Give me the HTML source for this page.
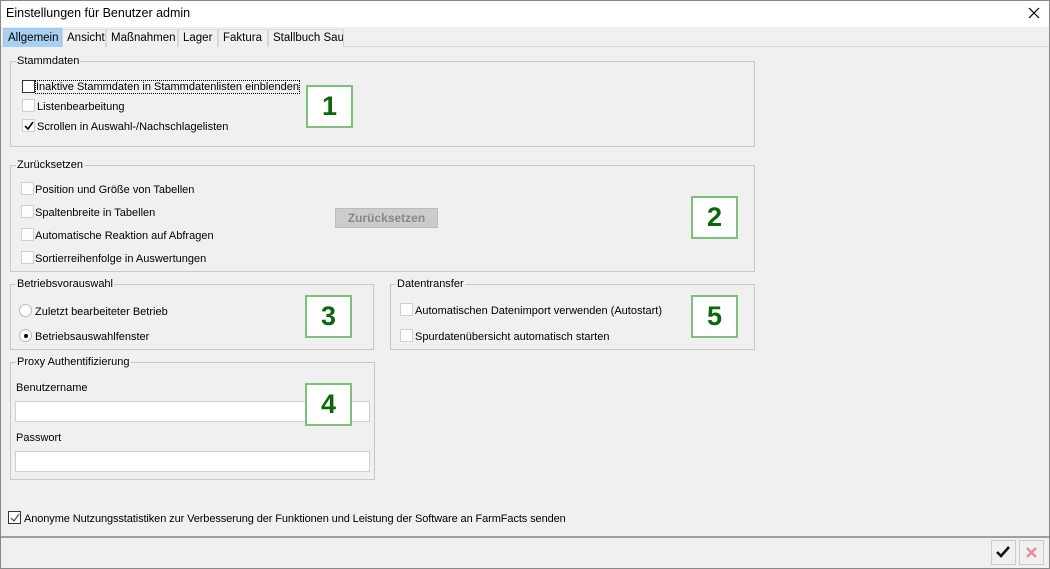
<!DOCTYPE html>
<html><head><meta charset="utf-8"><style>
*{box-sizing:border-box;margin:0;padding:0}
body{width:1050px;height:569px;background:#f0f0f0;font-family:"Liberation Sans",sans-serif;font-size:11px;color:#000;position:relative;overflow:hidden}
.a{position:absolute;white-space:nowrap}
.t{margin-top:2px}
.win{position:absolute;left:0;top:0;width:1050px;height:569px;border:1px solid #888}
.title{position:absolute;left:0;top:0;width:1050px;height:27px;background:#fff}
.tab{position:absolute;top:29px;height:18px;border:1px solid #d9d9d9;border-bottom:none;background:#f0f0f0;padding:2px 0 0 4px;font-size:11.5px;white-space:nowrap;overflow:hidden}
.grp{position:absolute;border:1px solid #c8c8c8}
.lab{position:absolute;top:-7px;left:5px;background:#f0f0f0;padding:0 1px;font-size:11px}
.cb{position:absolute;width:13px;height:13px;border:1px solid #333;background:#fff}
.cb2{position:absolute;width:13px;height:13px;border:1px solid #d0d0d0;background:#fdfdfd}
.rb{position:absolute;width:13px;height:13px;border:1px solid #bbb;border-radius:50%;background:#fff}
.num{position:absolute;width:47px;height:43px;border:2px solid #7cc07c;background:#fff;color:#0d660d;font-weight:bold;font-size:27px;text-align:center;line-height:39px}
.inp{position:absolute;background:#fff;border:1px solid #d0d0d0}
</style></head><body>
<div class="title"></div>
<div class="a" style="left:6px;top:6px;font-size:12.5px">Einstellungen für Benutzer admin</div>
<svg class="a" style="left:1028px;top:7px" width="12" height="12"><path d="M1 1L11 11M11 1L1 11" stroke="#000" stroke-width="1.2"/></svg>
<div class="a" style="left:0;top:46px;width:1050px;height:1px;background:#d9d9d9"></div>
<div class="tab" style="left:3px;width:59px;top:28px;height:19px;background:#a8d0f0;border-color:#a0c4e8;padding-top:3px">Allgemein</div>
<div class="tab" style="left:62px;width:44px">Ansicht</div>
<div class="tab" style="left:106px;width:72px">Maßnahmen</div>
<div class="tab" style="left:178px;width:40px">Lager</div>
<div class="tab" style="left:218px;width:50px">Faktura</div>
<div class="tab" style="left:268px;width:76px">Stallbuch Sau</div>

<div class="grp" style="left:10px;top:61px;width:745px;height:86px"><span class="lab">Stammdaten</span></div>
<div class="cb" style="left:22px;top:80px"></div><div class="a t" style="left:36px;top:79px;outline:1px dotted #000">Inaktive Stammdaten in Stammdatenlisten einblenden</div>
<div class="cb2" style="left:22px;top:99px"></div><div class="a t" style="left:37px;top:99px">Listenbearbeitung</div>
<div class="cb2" style="left:22px;top:119px"></div><svg class="a" style="left:24px;top:121px" width="10" height="10"><path d="M1 5L4 8L9 1" stroke="#000" stroke-width="1.6" fill="none"/></svg><div class="a t" style="left:37px;top:119px">Scrollen in Auswahl-/Nachschlagelisten</div>
<div class="num" style="left:306px;top:85px">1</div>

<div class="grp" style="left:10px;top:165px;width:745px;height:107px"><span class="lab">Zurücksetzen</span></div>
<div class="cb2" style="left:21px;top:182px"></div><div class="a t" style="left:35px;top:182px">Position und Größe von Tabellen</div>
<div class="cb2" style="left:21px;top:205px"></div><div class="a t" style="left:35px;top:205px">Spaltenbreite in Tabellen</div>
<div class="cb2" style="left:21px;top:228px"></div><div class="a t" style="left:35px;top:228px">Automatische Reaktion auf Abfragen</div>
<div class="cb2" style="left:21px;top:251px"></div><div class="a t" style="left:35px;top:251px">Sortierreihenfolge in Auswertungen</div>
<div class="a" style="left:335px;top:208px;width:103px;height:20px;background:#ccc;border:1px solid #bcbcbc;color:#888;font-weight:bold;font-size:12px;text-align:center;line-height:18px">Zurücksetzen</div>
<div class="num" style="left:691px;top:196px">2</div>

<div class="grp" style="left:10px;top:284px;width:364px;height:66px"><span class="lab">Betriebsvorauswahl</span></div>
<div class="rb" style="left:19px;top:304px"></div><div class="a t" style="left:35px;top:304px">Zuletzt bearbeiteter Betrieb</div>
<div class="rb" style="left:19px;top:329px"></div><div class="a" style="left:24px;top:334px;width:4px;height:4px;border-radius:50%;background:#000"></div><div class="a t" style="left:35px;top:329px">Betriebsauswahlfenster</div>
<div class="num" style="left:305px;top:295px">3</div>

<div class="grp" style="left:390px;top:284px;width:365px;height:66px"><span class="lab">Datentransfer</span></div>
<div class="cb2" style="left:400px;top:303px"></div><div class="a t" style="left:415px;top:303px">Automatischen Datenimport verwenden (Autostart)</div>
<div class="cb2" style="left:400px;top:329px"></div><div class="a t" style="left:415px;top:329px">Spurdatenübersicht automatisch starten</div>
<div class="num" style="left:691px;top:295px">5</div>

<div class="grp" style="left:10px;top:362px;width:365px;height:118px"><span class="lab">Proxy Authentifizierung</span></div>
<div class="a t" style="left:16px;top:380px">Benutzername</div>
<div class="inp" style="left:15px;top:401px;width:355px;height:21px"></div>
<div class="a t" style="left:16px;top:430px">Passwort</div>
<div class="inp" style="left:15px;top:451px;width:355px;height:21px"></div>
<div class="num" style="left:305px;top:383px">4</div>

<div class="a" style="left:8px;top:511px;width:13px;height:13px;border:1px solid #333;background:#fff"></div>
<svg class="a" style="left:10px;top:513px" width="10" height="10"><path d="M1 5L4 8L9 1" stroke="#555" stroke-width="1.3" fill="none"/></svg>
<div class="a t" style="left:24px;top:511px;letter-spacing:-0.1px">Anonyme Nutzungsstatistiken zur Verbesserung der Funktionen und Leistung der Software an FarmFacts senden</div>

<div class="a" style="left:0;top:536px;width:1050px;height:2px;background:#a0a0a0"></div>
<div class="a" style="left:991px;top:540px;width:25px;height:25px;border:1px solid #ccc;background:#f0f0f0"></div>
<svg class="a" style="left:995px;top:545px" width="16" height="14"><path d="M2 7L6 11L14 2" stroke="#111" stroke-width="2.6" fill="none"/></svg>
<div class="a" style="left:1019px;top:540px;width:25px;height:25px;border:1px solid #ccc;background:#f0f0f0"></div>
<svg class="a" style="left:1025px;top:546px" width="13" height="13"><path d="M2 2L11 11M11 2L2 11" stroke="#e8909a" stroke-width="2.6"/></svg>
<div class="win"></div>
</body></html>
